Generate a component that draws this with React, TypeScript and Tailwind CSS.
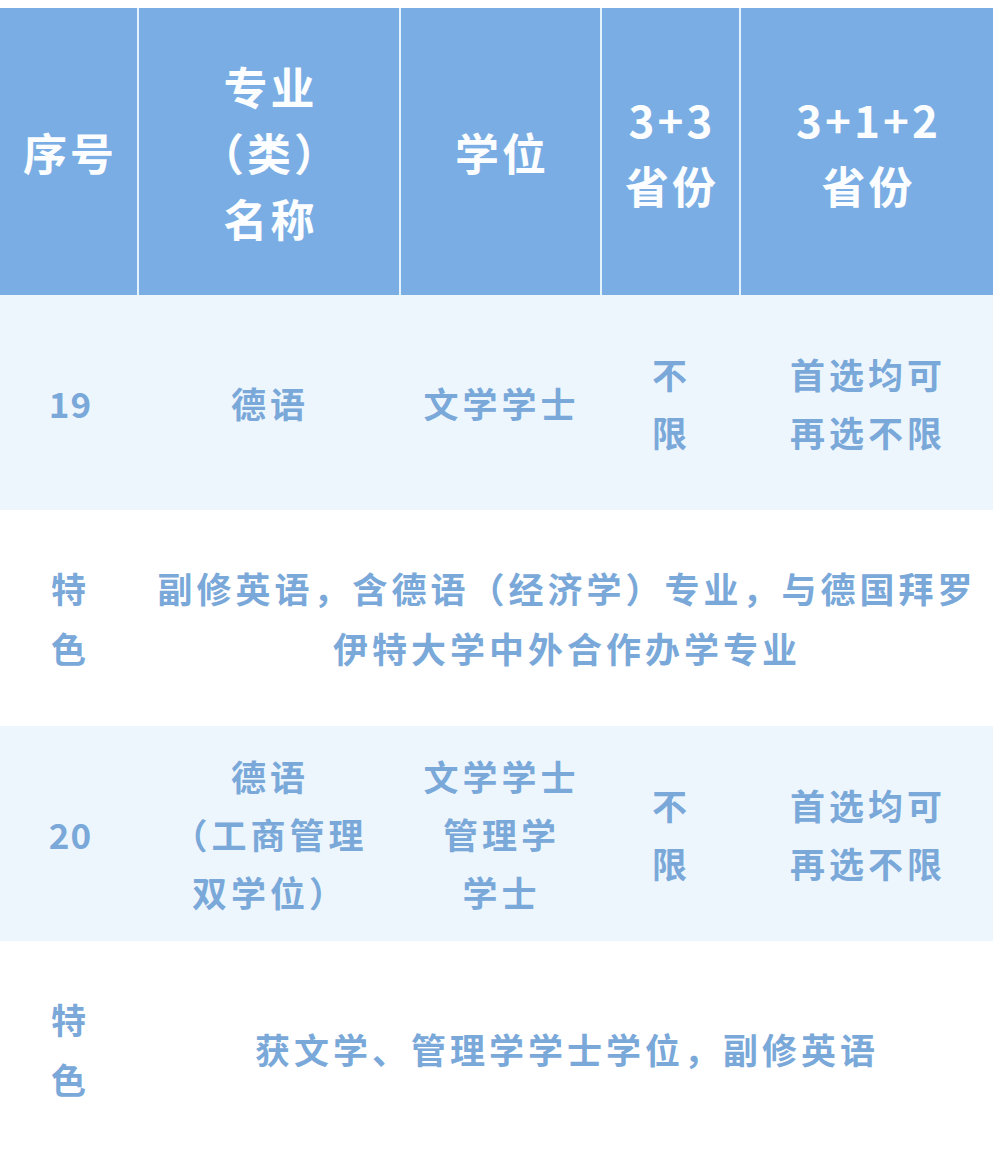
const cols = "grid grid-cols-[137px_262px_201px_139px_1fr]";

const headers = [
  ["序号"],
  ["专业", "（类）", "名称"],
  ["学位"],
  ["3+3", "省份"],
  ["3+1+2", "省份"],
];

type Row = string[][];

const majors: Row[] = [
  [["19"], ["德语"], ["文学学士"], ["不", "限"], ["首选均可", "再选不限"]],
  [["20"], ["德语", "（工商管理", "双学位）"], ["文学学士", "管理学", "学士"], ["不", "限"], ["首选均可", "再选不限"]],
];

const features: string[][] = [
  ["副修英语，含德语（经济学）专业，与德国拜罗", "伊特大学中外合作办学专业"],
  ["获文学、管理学学士学位，副修英语"],
];

function Lines({ lines }: { lines: string[] }) {
  return (
    <>
      {lines.map((l, i) => (
        <span key={i} className="block whitespace-nowrap">
          {l}
        </span>
      ))}
    </>
  );
}

export default function App() {
  return (
    <div
      className="w-[993px] h-[1160px] bg-white pt-[8px] overflow-hidden font-bold"
      style={{ fontFamily: '"Noto Sans CJK SC", "Noto Sans", sans-serif' }}
    >
      {/* header */}
      <div className={`${cols} h-[287px] bg-[#79ade3] text-[#fbfdff] text-[44px] leading-[66px] tracking-[3px]`}>
        {headers.map((h, i) => (
          <div
            key={i}
            className={`flex flex-col items-center justify-center text-center pl-[3px] ${i > 0 ? "border-l-2 border-[#e4f2fb]" : ""}`}
          >
            <Lines lines={h} />
          </div>
        ))}
      </div>

      {majors.map((row, r) => (
        <div key={r}>
          <div className={`${cols} h-[215px] bg-[#eef6fd] text-[#79a8d9] text-[35px] leading-[58px] tracking-[4px]`}>
            {row.map((cell, i) => (
              <div
                key={i}
                className={`flex flex-col items-center justify-center text-center pl-[4px] ${i === 0 ? "tracking-[1px]" : ""}`}
              >
                <Lines lines={cell} />
              </div>
            ))}
          </div>
          <div className="grid grid-cols-[137px_1fr] h-[216px] bg-white text-[#79a8d9] text-[35px] leading-[60px] tracking-[4px]">
            <div className="flex flex-col items-center justify-center text-center pl-[4px]">
              <Lines lines={["特", "色"]} />
            </div>
            <div className="flex flex-col items-center justify-center text-center pl-[4px]">
              <Lines lines={features[r]} />
            </div>
          </div>
        </div>
      ))}
    </div>
  );
}
